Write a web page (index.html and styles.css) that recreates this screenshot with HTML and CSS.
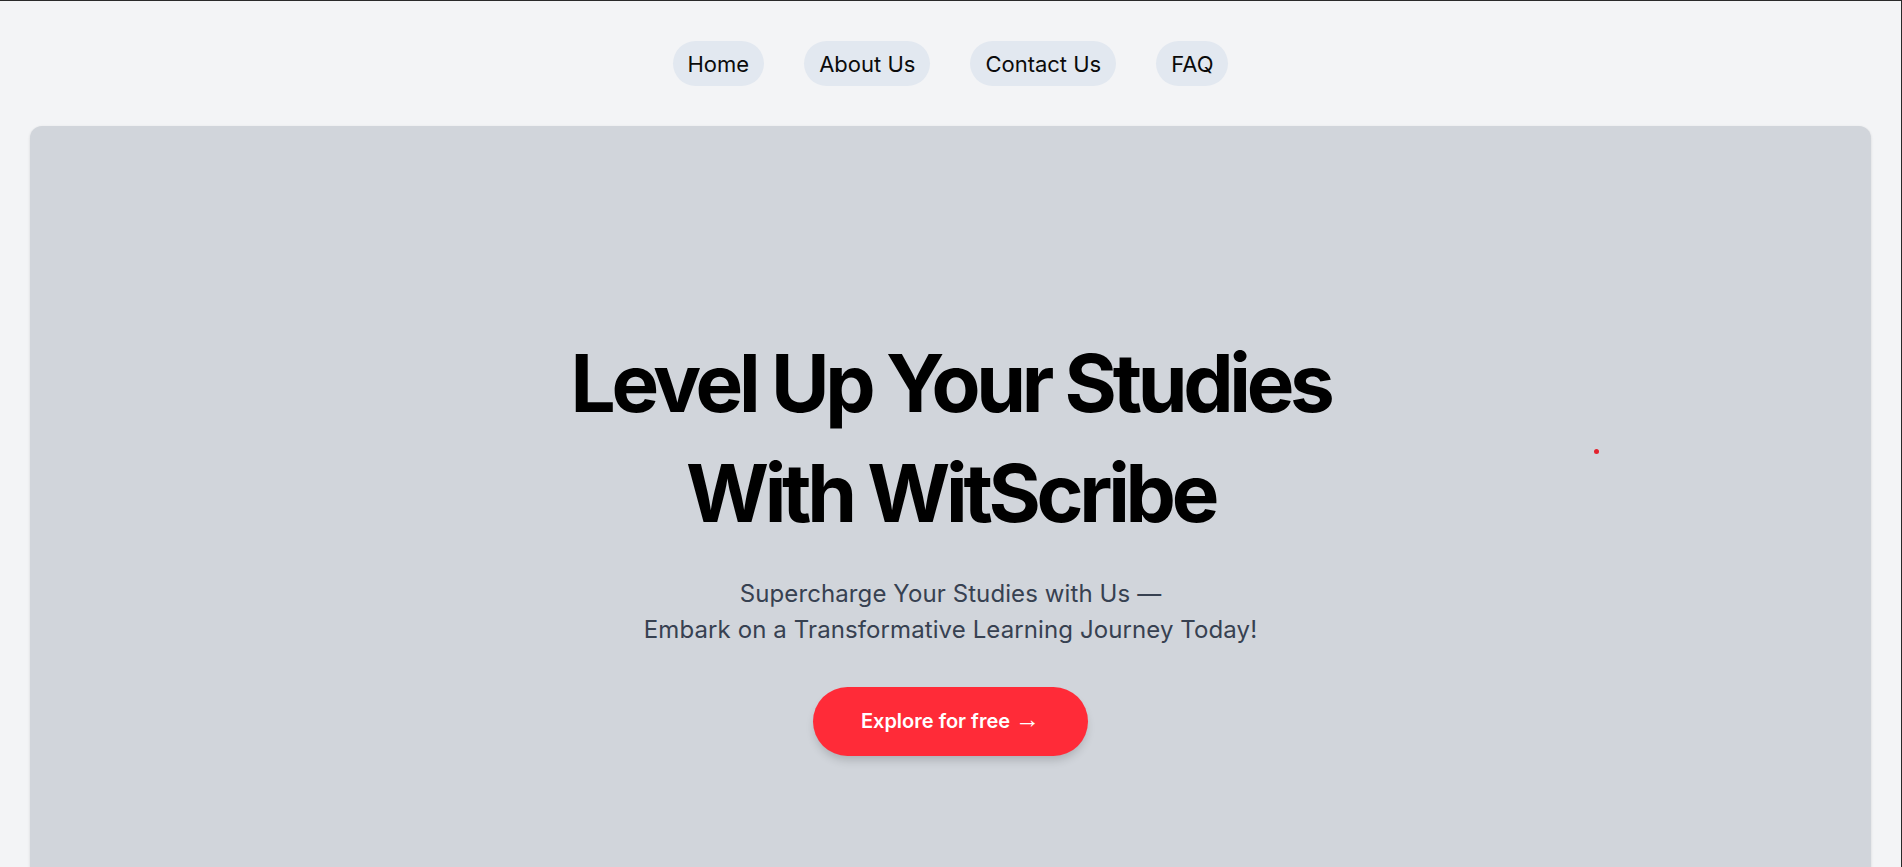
FILE: index.html
```html
<!DOCTYPE html>
<html lang="en">
<head>
<meta charset="utf-8">
<title>WitScribe</title>
<link rel="stylesheet" href="styles.css">
</head>
<body>
  <nav class="nav">
    <a class="nav-pill" href="#">Home</a>
    <a class="nav-pill" href="#">About Us</a>
    <a class="nav-pill" href="#">Contact Us</a>
    <a class="nav-pill" href="#">FAQ</a>
  </nav>
  <main class="hero">
    <span class="dot"></span>
    <h1 class="hero-title">Level Up Your Studies<br>With WitScribe</h1>
    <p class="hero-sub">Supercharge Your Studies with Us —<br>Embark on a Transformative Learning Journey Today!</p>
    <a class="cta" href="#">Explore for free <span class="cta-arrow">→</span></a>
  </main>
</body>
</html>
```

FILE: styles.css
```css
html {
  background: #f3f4f6;
  border-top: 1px solid #2a2a2a;
  border-right: 1px solid #2a2a2a;
  height: 100%;
  box-sizing: border-box;
  overflow: hidden;
}
body {
  margin: 0;
  font-family: Inter, "Noto Sans", sans-serif;
  color: #000;
}
.nav {
  display: flex;
  justify-content: center;
  gap: 40px;
  padding: 40px 0;
}
.nav-pill {
  display: block;
  background: #e2e8f0;
  color: #0b0b0b;
  text-decoration: none;
  font-size: 22px;
  line-height: 27px;
  padding: 10px 15px 8px;
  border-radius: 9999px;
}
.hero {
  position: relative;
  margin: 0 30px;
  background: #d1d5db;
  border-radius: 12px;
  box-shadow: 0 1px 3px rgba(0,0,0,0.12);
  min-height: 900px;
  padding-top: 202px;
  text-align: center;
  box-sizing: border-box;
}
.hero-title {
  margin: 0;
  font-size: 80px;
  line-height: 110px;
  font-weight: 700;
  letter-spacing: -4.3px;
  color: #000;
}
.hero-sub {
  margin: 28px 0 0;
  font-size: 24px;
  line-height: 36px;
  letter-spacing: 0.1px;
  color: #374151;
}
.cta {
  display: inline-block;
  margin-top: 39px;
  background: #ff2b38;
  color: #fff;
  text-decoration: none;
  font-size: 20px;
  font-weight: 600;
  line-height: 28px;
  padding: 20px 48px 21px;
  border-radius: 9999px;
  box-shadow: 0 6px 10px -2px rgba(0,0,0,0.18);
}
.cta-arrow {
  font-family: "Liberation Sans", sans-serif;
  font-weight: 400;
  font-size: 25px;
  line-height: 20px;
}
.dot {
  position: absolute;
  left: 1564px;
  top: 323px;
  width: 5px;
  height: 5px;
  border-radius: 50%;
  background: #e3222d;
}
```
